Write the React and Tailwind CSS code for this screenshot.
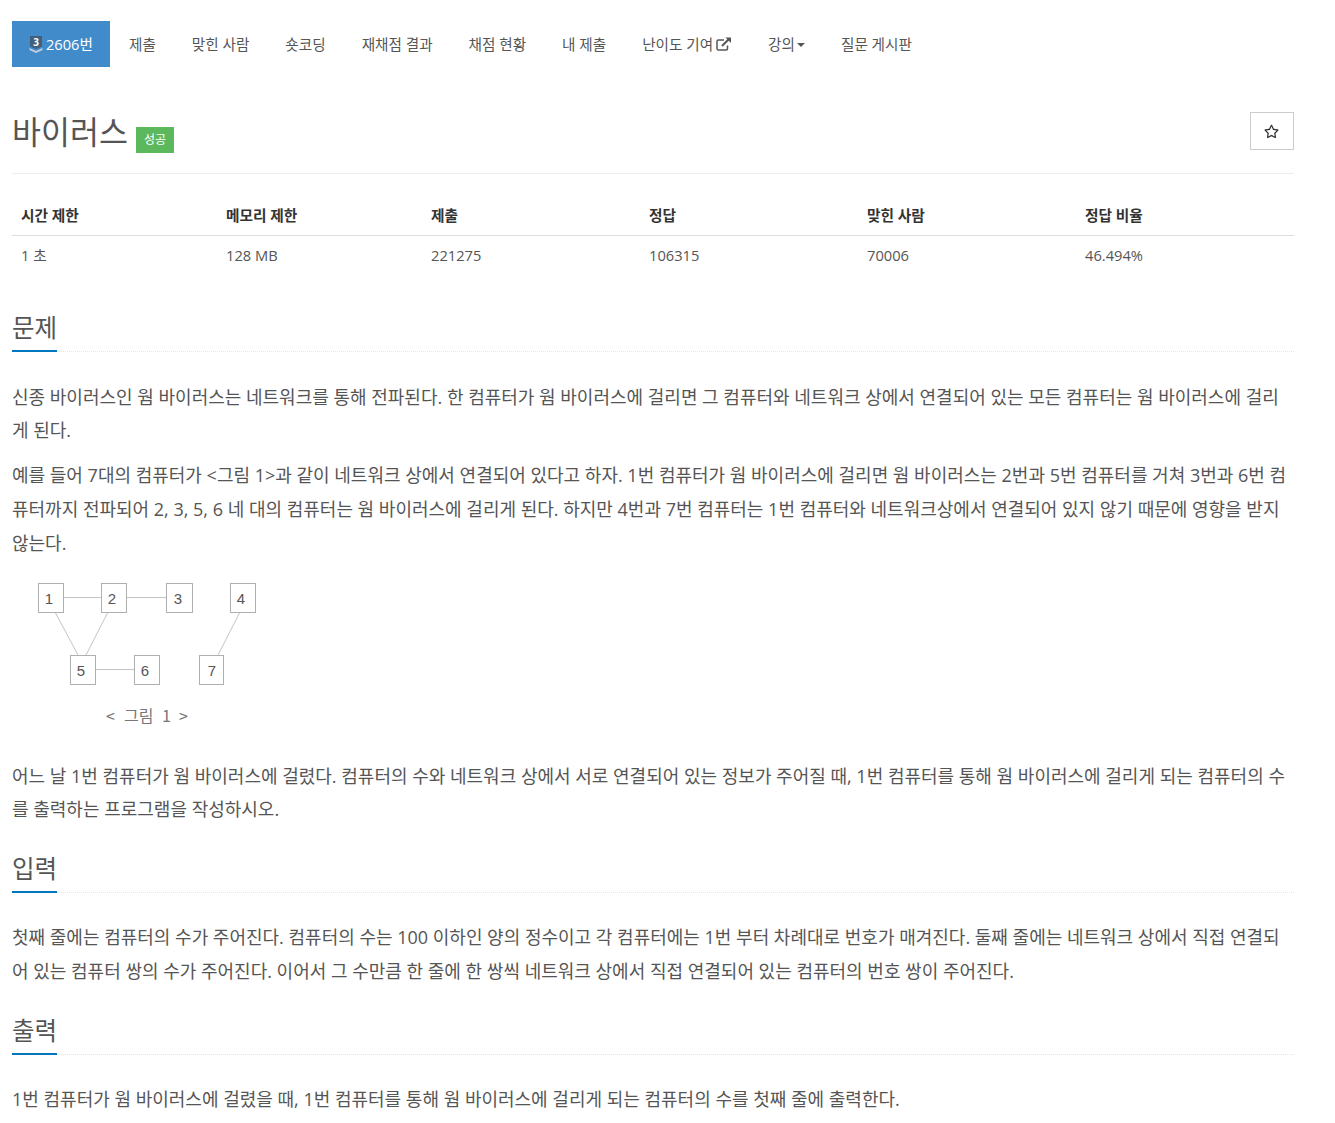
import React from 'react';
import { FaRegStar } from 'react-icons/fa';

const font = "font-['Open_Sans','Noto_Sans_CJK_KR',sans-serif]";

const navItems = ['제출', '맞힌 사람', '숏코딩', '재채점 결과', '채점 현황', '내 제출'];

const stats = [
  { label: '시간 제한', value: '1 초', width: 'w-[205px]' },
  { label: '메모리 제한', value: '128 MB', width: 'w-[205px]' },
  { label: '제출', value: '221275', width: 'w-[218px]' },
  { label: '정답', value: '106315', width: 'w-[218px]' },
  { label: '맞힌 사람', value: '70006', width: 'w-[218px]' },
  { label: '정답 비율', value: '46.494%', width: 'flex-1' },
];

const boxes = [
  { x: 8, y: 5, w: 25, h: 29, t: '1', tx: 19 },
  { x: 71, y: 5, w: 25, h: 29, t: '2', tx: 82 },
  { x: 136, y: 5, w: 26, h: 29, t: '3', tx: 148 },
  { x: 200, y: 5, w: 25, h: 29, t: '4', tx: 211 },
  { x: 40, y: 77, w: 25, h: 29, t: '5', tx: 51 },
  { x: 104, y: 77, w: 25, h: 29, t: '6', tx: 115 },
  { x: 169, y: 77, w: 24, h: 29, t: '7', tx: 182 },
];

const Figure = () => (
  <svg width="240" height="160" viewBox="0 0 240 160" className="block">
    <g stroke="#c4c4c4" strokeWidth="1" fill="none">
      <path d="M34 19.5H71M97 19.5H136M65 91.5H104" />
      <path d="M25 34L48 77M78 34L56 77M210 34L188 77" />
      {boxes.map(b => (
        <rect key={b.t} x={b.x + 0.5} y={b.y + 0.5} width={b.w} height={b.h} stroke="#b0b0b0" fill="#fff" />
      ))}
    </g>
    <g fontSize="15" fill="#555" fontFamily="'Liberation Sans', sans-serif">
      {boxes.map(b => (
        <text key={b.t} x={b.tx} y={b.y + 21} textAnchor="middle">
          {b.t}
        </text>
      ))}
    </g>
    <g fontSize="16" fill="#777" fontFamily="'Noto Sans CJK KR', sans-serif">
      <text x="76" y="144">&lt;</text>
      <text x="94" y="144">그림</text>
      <text x="132" y="144">1</text>
      <text x="149" y="144">&gt;</text>
    </g>
  </svg>
);

const Section = ({ title, children, gap = 'mb-[29px]' }) => (
  <section>
    <div className={`border-b border-dotted border-[#e5e5e5] h-[41px] ${gap}`}>
      <h2 className="inline-block h-[41px] border-b-2 border-[#0076c0] text-[24.5px] leading-[33px] text-[#555] font-normal w-[45px] whitespace-nowrap">
        {title}
      </h2>
    </div>
    {children}
  </section>
);

const P = ({ children }) => (
  <p className="text-[18px] leading-[33.6px] text-[#555] break-all">{children}</p>
);

export default function App() {
  return (
    <div className={`${font} bg-white w-[1335px] min-h-[1123px] pt-[21px] pl-[12px] pr-[41px] text-[#555]`}>
      <nav className="flex items-center h-[46px] text-[14.6px] leading-[20px]">
        <div className="flex items-center h-full w-[98px] mr-[1px] bg-[#428bca] text-white pl-[17px] gap-[3px]">
          <svg width="14" height="17" viewBox="0 0 14 17">
            <path d="M1 0H13V10.5L7 13L1 10.5Z" fill="#435f7a" />
            <path d="M0.5 12L7 15L13.5 12V14L7 17L0.5 14Z" fill="#c7d0da" />
            <text x="7" y="9.5" textAnchor="middle" fontSize="10" fontWeight="700" fill="#fff" fontFamily="'Open Sans', sans-serif">3</text>
          </svg>
          <span>2606번</span>
        </div>
        {navItems.map(item => (
          <a key={item} className="px-[18px] whitespace-nowrap">{item}</a>
        ))}
        <a className="px-[18px] flex items-center gap-[3px] whitespace-nowrap">
          난이도 기여
          <svg width="16" height="14" viewBox="0 0 16 14" fill="none" stroke="#555" strokeWidth="1.5">
            <path d="M11.5 8.5V11.5Q11.5 13 10 13H2.5Q1 13 1 11.5V4.5Q1 3 2.5 3H8" />
            <path d="M6 9L13 2" strokeWidth="2" />
            <path d="M9.5 0.5H15V6Z" fill="#555" stroke="none" />
          </svg>
        </a>
        <a className="px-[18px] flex items-center whitespace-nowrap">
          강의
          <span className="ml-[2px] mt-[2px] border-x-[4px] border-t-[4px] border-x-transparent border-t-[#555]" />
        </a>
        <a className="px-[18px] whitespace-nowrap">질문 게시판</a>
      </nav>

      <header className="flex justify-between items-start mt-[45px] h-[62px] border-b border-[#eee]">
        <div className="flex items-end">
          <h1 className="-mt-[1px] text-[31.5px] leading-[42px] font-normal text-[#555]">바이러스</h1>
          <span className="ml-[8px] w-[38px] h-[26px] bg-[#5cb85c] text-white text-[12px] flex items-center justify-center">성공</span>
        </div>
        <button className="w-[44px] h-[38px] pr-[2px] border border-[#ccc] flex items-center justify-center text-[#333]">
          <FaRegStar size={15} />
        </button>
      </header>

      <div className="mt-[20px] text-[14.7px]">
        <div className="flex h-[42px] pt-[2px] items-center border-b border-[#ddd] font-bold text-[#333]">
          {stats.map(s => (
            <div key={s.label} className={`${s.width} pl-[9px]`}>{s.label}</div>
          ))}
        </div>
        <div className="flex h-[38px] items-center">
          {stats.map(s => (
            <div key={s.label} className={`${s.width} pl-[9px]`}>{s.value}</div>
          ))}
        </div>
      </div>

      <div className="mt-[37px]">
        <Section title="문제" gap="mb-[28.6px]">
          <P>신종 바이러스인 웜 바이러스는 네트워크를 통해 전파된다. 한 컴퓨터가 웜 바이러스에 걸리면 그 컴퓨터와 네트워크 상에서 연결되어 있는 모든 컴퓨터는 웜 바이러스에 걸리게 된다.</P>
          <div className="h-[11.6px]" />
          <P>예를 들어 7대의 컴퓨터가 &lt;그림 1&gt;과 같이 네트워크 상에서 연결되어 있다고 하자. 1번 컴퓨터가 웜 바이러스에 걸리면 웜 바이러스는 2번과 5번 컴퓨터를 거쳐 3번과 6번 컴퓨터까지 전파되어 2, 3, 5, 6 네 대의 컴퓨터는 웜 바이러스에 걸리게 된다. 하지만 4번과 7번 컴퓨터는 1번 컴퓨터와 네트워크상에서 연결되어 있지 않기 때문에 영향을 받지 않는다.</P>
          <div className="mt-[18px] ml-[18px]"><Figure /></div>
          <div className="mt-[21.6px]">
            <P>어느 날 1번 컴퓨터가 웜 바이러스에 걸렸다. 컴퓨터의 수와 네트워크 상에서 서로 연결되어 있는 정보가 주어질 때, 1번 컴퓨터를 통해 웜 바이러스에 걸리게 되는 컴퓨터의 수를 출력하는 프로그램을 작성하시오.</P>
          </div>
        </Section>
        <div className="mt-[25px]">
          <Section title="입력" gap="mb-[28px]">
            <P>첫째 줄에는 컴퓨터의 수가 주어진다. 컴퓨터의 수는 100 이하인 양의 정수이고 각 컴퓨터에는 1번 부터 차례대로 번호가 매겨진다. 둘째 줄에는 네트워크 상에서 직접 연결되어 있는 컴퓨터 쌍의 수가 주어진다. 이어서 그 수만큼 한 줄에 한 쌍씩 네트워크 상에서 직접 연결되어 있는 컴퓨터의 번호 쌍이 주어진다.</P>
          </Section>
        </div>
        <div className="mt-[26px]">
          <Section title="출력" gap="mb-[28px]">
            <P>1번 컴퓨터가 웜 바이러스에 걸렸을 때, 1번 컴퓨터를 통해 웜 바이러스에 걸리게 되는 컴퓨터의 수를 첫째 줄에 출력한다.</P>
          </Section>
        </div>
      </div>
    </div>
  );
}
